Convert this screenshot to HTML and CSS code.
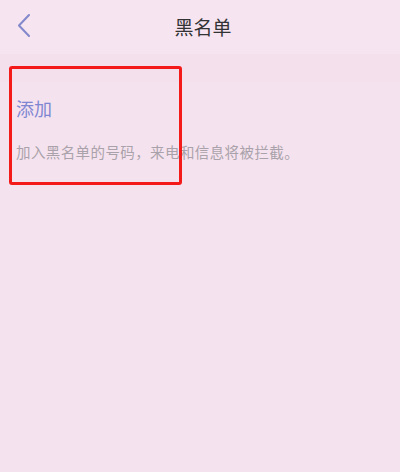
FILE: index.html
```html
<!DOCTYPE html>
<html lang="zh">
<head>
<meta charset="utf-8">
<link rel="stylesheet" href="styles.css">
</head>
<body>
<div class="page">
  <header class="topbar">
    <svg class="back" width="16" height="24" viewBox="0 0 16 24">
      <polyline points="13,2 3,12.5 13,23" fill="none" stroke="#8388cc" stroke-width="2" stroke-linecap="round" stroke-linejoin="round"/>
    </svg>
    <h1 class="title">黑名单</h1>
  </header>
  <div class="band"></div>
  <section class="content">
    <div class="add">添加</div>
    <p class="desc">加入黑名单的号码，来电和信息将被拦截。</p>
  </section>
  <div class="highlight"></div>
</div>
</body>
</html>
```

FILE: styles.css
```css
html, body {
  margin: 0;
  padding: 0;
  background: #f5e3ef;
}
.page {
  position: relative;
  width: 400px;
  height: 472px;
  font-family: "Noto Sans CJK SC", "Noto Sans", sans-serif;
  background: #f5e2ef;
}
.topbar {
  position: relative;
  height: 54px;
  display: flex;
  align-items: center;
  justify-content: center;
  background: #f6e5f0;
}
.back {
  position: absolute;
  left: 16px;
  top: 13px;
}
.title {
  margin: 0 0 0 6px;
  font-size: 19px;
  font-weight: 400;
  color: #333336;
  line-height: 24px;
}
.band {
  height: 28px;
  background: #f3e0ec;
}
.content {
  padding: 14px 16px 0;
}
.add {
  font-size: 18px;
  line-height: 24px;
  color: #8087d2;
}
.desc {
  margin: 22px 0 0;
  font-size: 14.5px;
  line-height: 20px;
  letter-spacing: 0.4px;
  color: #aaa2aa;
}
.highlight {
  position: absolute;
  left: 9px;
  top: 66px;
  width: 167px;
  height: 113px;
  border: 3px solid #f51a1a;
  border-radius: 3px;
}
```
